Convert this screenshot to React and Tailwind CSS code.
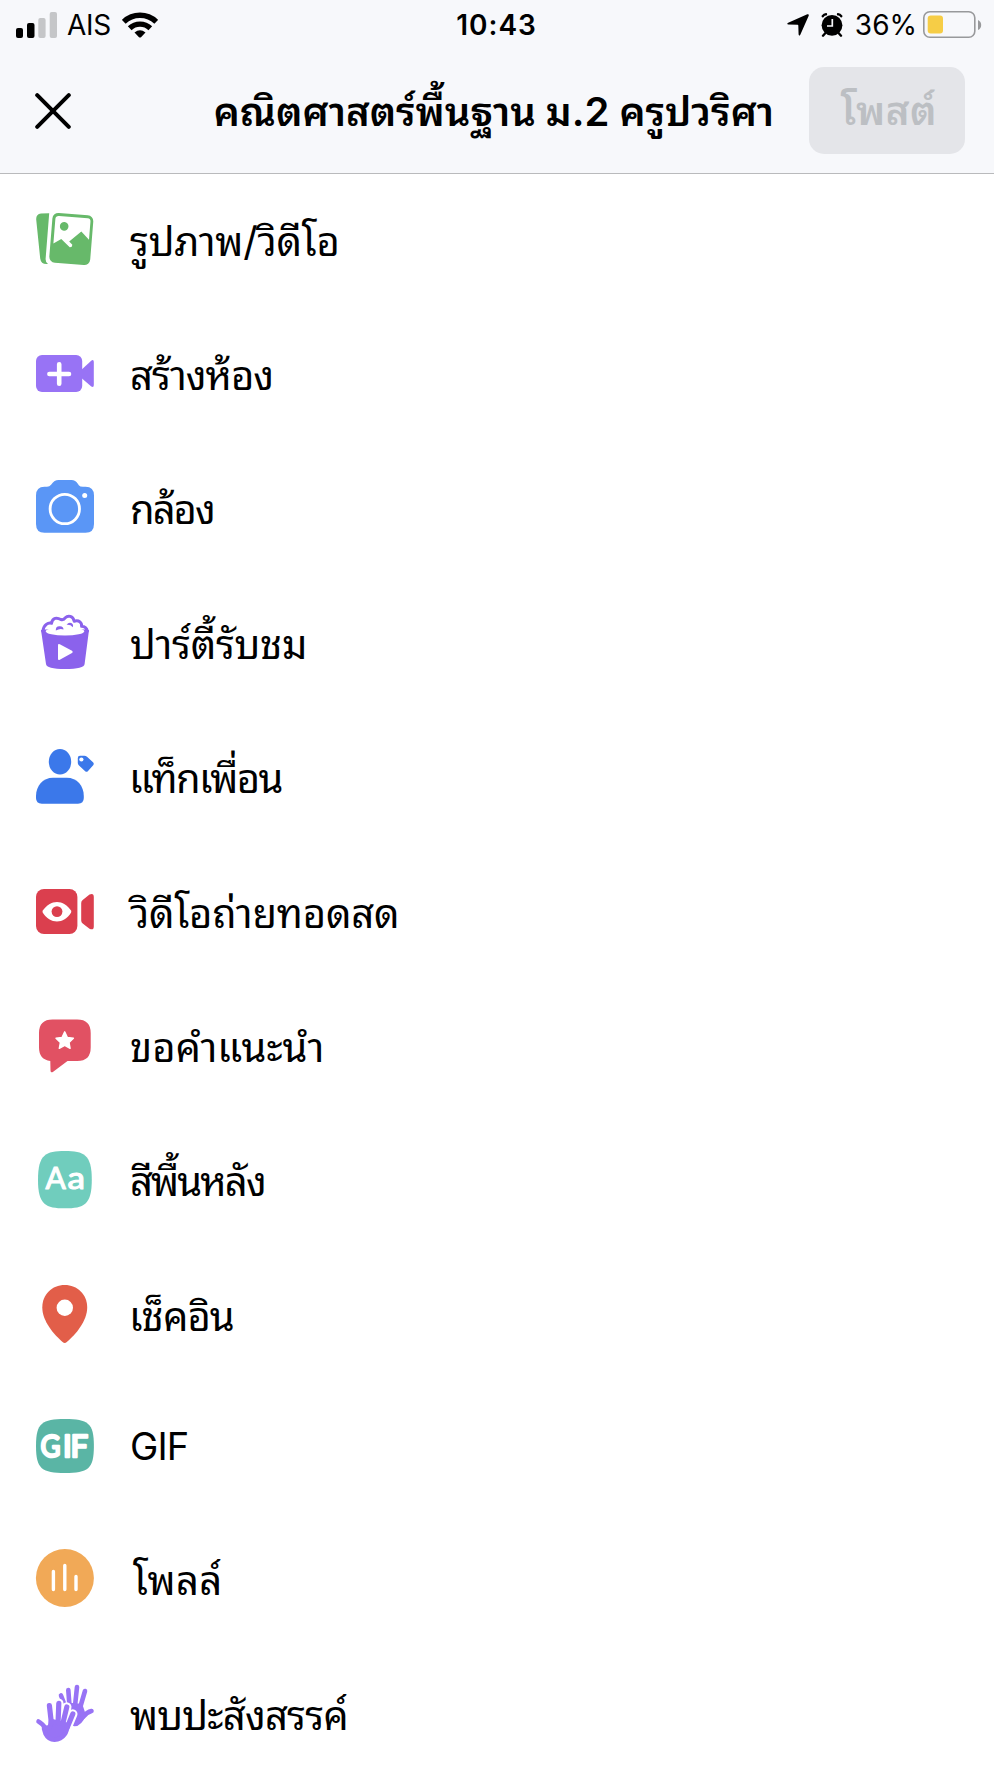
import React from "react";

const PhotoIcon = () => (
  <svg viewBox="0 0 58 58" className="size-[58px] overflow-visible" fill="#67b96a">
    <path d="M5 3.6L13.2 3.3L9.6 49Q9.5 52.5 12 54Q5 54.8 4.2 48.5L0.2 9.5Q0 4.2 5 3.6Z" />
    <g transform="rotate(4.6 35.3 29)">
      <rect x="14.8" y="4" width="41" height="50" rx="6" />
      <path
        d="M21.3 7H50Q53 7 53 10V28.4L44.7 20.8L33.4 31.6L36.8 34.6Q37 37.4 34.4 37.4L25.3 29.8L17.8 34.8V10Q18 7 21.3 7Z"
        fill="#fff"
      />
      <circle cx="27.2" cy="17" r="4.3" />
    </g>
  </svg>
);

const RoomIcon = () => (
  <svg viewBox="0 0 58 58" className="size-[58px] overflow-visible" fill="#9873f5">
    <rect x="0" y="11" width="46.2" height="37" rx="6" />
    <path d="M46 25.3L55.5 16.4Q57.8 15.4 57.8 18V41Q57.8 44 55.3 42.6L46 34.6Z" />
    <path
      d="M23.2 20.2V39.8M13.4 30H33"
      stroke="#fff"
      strokeWidth="4.6"
      strokeLinecap="round"
    />
  </svg>
);

const CameraIcon = () => (
  <svg viewBox="0 0 58 58" className="size-[58px] overflow-visible" fill="#5a96f6">
    <path d="M8.5 8.7H11Q13.5 8.7 15.3 6.4Q18.5 2 22.5 2H35.5Q39.5 2 42 6L42.8 7.2Q44 8.7 47 8.7H49.5Q58 8.7 58 17.5V46Q58 54.8 49.5 54.8H8.5Q0 54.8 0 46V17.5Q0 8.7 8.5 8.7Z" />
    <circle cx="28.8" cy="31" r="14.7" fill="none" stroke="#fff" strokeWidth="2.8" />
    <circle cx="48.7" cy="17.4" r="2.5" fill="#fff" />
  </svg>
);

const PopcornIcon = () => (
  <svg viewBox="0 0 58 58" className="size-[58px] overflow-visible" fill="#8b62ec">
    <path d="M5 17L53 17L48.6 51Q48.2 56 29 56Q10.5 56 10 51Z" />
    <path
      d="M6.8 18C8 11.5 12 9.5 15.5 10.3C16.5 4.5 21 4.2 24.8 6.5C27.5 7.2 28.3 6.5 29.3 4.8C32.2 1.8 37 3 38.2 8.2C43.2 6.8 46 9.8 45.6 13.3C49.2 13.6 50.8 15.4 51.4 18Z"
      fill="#fff"
      stroke="#8b62ec"
      strokeWidth="3"
      strokeLinejoin="round"
    />
    <ellipse cx="29" cy="18.3" rx="19.3" ry="4.3" fill="#fff" />
    <path d="M19.8 17.5Q19.5 12.8 24 13.2Q27.6 13.4 27.5 16.6Q24.5 14.8 19.8 17.5Z" />
    <path d="M30.6 11.8Q32.4 8.9 35.3 9.9Q37.8 11 36.8 14.2Q34.6 11.4 30.6 11.8Z" />
    <path d="M22 32.2Q22 30.4 23.8 31.2L36 37.8Q37.6 39 36 40L23.8 46.8Q22 47.6 22 45.8Z" fill="#fff" />
  </svg>
);

const TagFriendsIcon = () => (
  <svg viewBox="0 0 58 58" className="size-[58px] overflow-visible" fill="#3b78ea">
    <ellipse cx="24" cy="14.8" rx="11.2" ry="12.8" />
    <path d="M17 30.8H30.8C41 30.8 47.8 39 47.8 49V51Q47.8 56.7 42 56.7H5.8Q0 56.7 0 51V49C0 39 7 30.8 17 30.8Z" />
    <path d="M44 8.7H48.3Q49.8 8.7 51 9.7L57 15.3Q58.4 16.7 57.2 18.2L51.8 24.2Q50.6 25.4 49.2 24.2L43 18.5Q41.8 17.4 41.8 16V11Q41.8 8.7 44 8.7Z" />
    <circle cx="45.4" cy="12.5" r="2.1" fill="#fff" />
  </svg>
);

const LiveIcon = () => (
  <svg viewBox="0 0 58 58" className="size-[58px] overflow-visible" fill="#db3f4e">
    <rect x="0" y="7" width="41.4" height="45" rx="8" />
    <path d="M45.2 21Q45.2 19 46.7 17.9L53.5 12.6Q57.8 10.8 57.8 15V44.5Q57.8 48.6 53.5 46.8L46.7 41.4Q45.2 40.2 45.2 38.4Z" />
    <path
      d="M6.8 28.6C14 17 28 17 35 28.6Q35.6 29.7 35 30.8C28 42.4 14 42.4 6.8 30.8Q6.2 29.7 6.8 28.6Z"
      fill="#fff"
    />
    <circle cx="21" cy="29.6" r="5.4" />
  </svg>
);

const RecommendIcon = () => (
  <svg viewBox="0 0 58 58" className="size-[58px] overflow-visible" fill="#e15163">
    <path d="M16.5 3.4H41.2Q54.7 3.4 54.7 17V31.5Q54.7 45 41.2 45H31.5L17.2 55.8Q14.6 57.4 14.5 54.5L14.3 45Q3 43.5 3 31.5V17Q3 3.4 16.5 3.4Z" />
    <path
      d="M28.7 15.8L31.4 21.5L37.4 22.2L33 26.4L34.1 32.3L28.7 29.4L23.3 32.3L24.4 26.4L20 22.2L26 21.5Z"
      fill="#fff"
      stroke="#fff"
      strokeWidth="1.4"
      strokeLinejoin="round"
    />
  </svg>
);

const BackgroundIcon = () => (
  <svg viewBox="0 0 58 58" className="size-[58px] overflow-visible">
    <path
      d="M28.8 1C48 1 55.8 4.5 55.8 29.7C55.8 54.8 48 58.3 28.8 58.3C9.7 58.3 2 54.8 2 29.7C2 4.5 9.7 1 28.8 1Z"
      fill="#70cdbd"
    />
    <g
      className="font-['Lato'] text-[30px]"
      fill="#fff"
      stroke="#fff"
      strokeWidth="1.1"
      strokeLinejoin="round"
    >
      <text x="9.6" y="38.8">A</text>
      <text x="31.5" y="38.8" textLength="17.5" lengthAdjust="spacingAndGlyphs">a</text>
    </g>
  </svg>
);

const CheckInIcon = () => (
  <svg viewBox="0 0 58 58" className="size-[58px] overflow-visible">
    <path
      d="M28.7 0C41.5 0 51.2 9.5 51.2 22.5C51.2 36 40 49 30.8 57Q28.7 58.8 26.6 57C17.5 49 6.3 36 6.3 22.5C6.3 9.5 16 0 28.7 0Z"
      fill="#e25e49"
    />
    <circle cx="28.8" cy="22.8" r="8.2" fill="#fff" />
  </svg>
);

const GifIcon = () => (
  <svg viewBox="0 0 58 58" className="size-[58px] overflow-visible">
    <path
      d="M29 2C52 2 57.9 6 57.9 29C57.9 52 52 56 29 56C6 56 0 52 0 29C0 6 6 2 29 2Z"
      fill="#5ab5a5"
    />
    <g
      className="font-['Lato'] text-[31px]"
      fill="#fff"
      stroke="#fff"
      strokeWidth="2.5"
      strokeLinejoin="round"
    >
      <text x="4.6" y="40.2" textLength="20" lengthAdjust="spacingAndGlyphs">G</text>
      <text x="27" y="40.2">I</text>
      <text x="34.4" y="40.2">F</text>
    </g>
  </svg>
);

const PollIcon = () => (
  <svg viewBox="0 0 58 58" className="size-[58px] overflow-visible">
    <circle cx="28.9" cy="29" r="29" fill="#f1a957" />
    <path
      d="M17.4 22.5V40.5M28.8 16.4V40.5M40 27.5V40.5"
      stroke="#fff"
      strokeWidth="3.4"
      strokeLinecap="round"
    />
  </svg>
);

const fingers = "M13.4 21.6L15.5 40M22.8 19.3L22 40M30.8 23L26.5 41M36.8 30L31 44";
const thumb = "M2.5 37.5Q6.5 39.5 10 45";

const MeetIcon = () => (
  <svg
    viewBox="0 0 58 58"
    className="size-[58px] overflow-visible"
    fill="#9873f5"
    stroke="#9873f5"
    strokeWidth="4.6"
    strokeLinecap="round"
    strokeLinejoin="round"
  >
    <path d="M25 11.5L29 22M32.3 6L33.5 22M41 3L39 22M49 7L44 24M55.5 27Q51 28 47 33" fill="none" />
    <path d="M33 21L44.5 22L47.5 31Q44 39.5 38.5 40L32 30Z" />
    <path d={fingers} fill="none" stroke="#fff" strokeWidth="9.4" />
    <path d={fingers} fill="none" strokeWidth="5.2" />
    <path d={thumb} fill="none" />
    <path d="M15 37L31.5 41Q31 47 28.5 50.5Q25 55.6 18.5 55.6Q12.500 55.600 9.700 50L8 44.500L14 43Z" />
  </svg>
);

const menuItems = [
  { label: "รูปภาพ/วิดีโอ", Icon: PhotoIcon, spacing: "tracking-[-0.2px]" },
  { label: "สร้างห้อง", Icon: RoomIcon, spacing: "tracking-[-1px]" },
  { label: "กล้อง", Icon: CameraIcon, spacing: "tracking-[-2px]" },
  { label: "ปาร์ตี้รับชม", Icon: PopcornIcon, spacing: "tracking-[-0.3px]" },
  { label: "แท็กเพื่อน", Icon: TagFriendsIcon, spacing: "-ml-px tracking-[-1.6px]" },
  { label: "วิดีโอถ่ายทอดสด", Icon: LiveIcon, spacing: "tracking-[-0.2px]" },
  { label: "ขอคำแนะนำ", Icon: RecommendIcon },
  { label: "สีพื้นหลัง", Icon: BackgroundIcon, spacing: "tracking-[-1.9px]" },
  { label: "เช็คอิน", Icon: CheckInIcon, spacing: "-ml-px tracking-[-0.9px]" },
  { label: "GIF", Icon: GifIcon, latin: true },
  { label: "โพลล์", Icon: PollIcon, spacing: "ml-[3px] tracking-[0.4px]" },
  { label: "พบปะสังสรรค์", Icon: MeetIcon, spacing: "tracking-[-0.8px]" },
];

const StatusBar = () => (
  <div className="grid h-[50px] grid-cols-3 items-center pl-4 pr-3 text-[28px] leading-none">
    <div className="flex items-center">
      <svg viewBox="0 0 42 26" className="h-[26px] w-[42px]">
        <rect x="0" y="16" width="7" height="10" rx="2" />
        <rect x="11" y="11" width="7.5" height="15" rx="2" />
        <rect x="22.3" y="6" width="7.3" height="20" rx="2" fill="#c5c6c8" />
        <rect x="33.7" y="0" width="7.3" height="26" rx="2" fill="#c5c6c8" />
      </svg>
      <span className="ml-[9px] tracking-[-0.3px]">AIS</span>
      <svg viewBox="0 0 36 26" className="ml-[11px] h-[26px] w-9">
        <g fill="none" stroke="#000" strokeWidth="5.4">
          <path d="M1.8 9.8A23.5 23.5 0 0 1 34.2 9.8" />
          <path d="M7.7 16.2A15 15 0 0 1 28.3 16.2" />
        </g>
        <path d="M12.5 20.5Q18 15.8 23.5 20.5L19 25.2Q18 26 17 25.2Z" />
      </svg>
    </div>
    <span className="pr-[5px] text-center font-semibold tracking-[1px]">10:43</span>
    <div className="flex items-center justify-end">
      <svg viewBox="0 0 22 22" className="h-[22px] w-[22px]">
        <path d="M20.3 0.3Q22.2 -0.2 21.7 1.7L13.3 20.8Q12.2 22.6 11.6 20.5L11.3 11.5Q11.3 10.8 10.6 10.8L1.3 10.5Q-0.7 9.8 1.2 8.8Z" />
      </svg>
      <svg viewBox="0 0 22 24" className="ml-3 h-6 w-[22px]">
        <circle cx="11" cy="12.3" r="10.4" />
        <path
          d="M1.8 3.2Q3 1.2 5 1.2M17 1.2Q19 1.2 20.2 3.2M4 20.5L2 22.7M18 20.5L20 22.7"
          fill="none"
          stroke="#000"
          strokeWidth="2.4"
          strokeLinecap="round"
        />
        <path d="M11.3 6V13H6" fill="none" stroke="#f7f8fb" strokeWidth="1.7" />
      </svg>
      <span className="ml-3">36%</span>
      <svg viewBox="0 0 59 28" className="ml-[6px] h-7 w-[59px]">
        <rect x="0.8" y="0.8" width="51" height="25.5" rx="6" fill="none" stroke="#98999b" strokeWidth="1.6" />
        <rect x="4.7" y="4.6" width="15.3" height="18" rx="3" fill="#f6cd46" />
        <path d="M55 9Q58.2 10.5 58.2 14Q58.2 17.5 55 19Z" fill="#98999b" />
      </svg>
    </div>
  </div>
);

const Header = () => (
  <header className="flex h-[124px] items-start justify-between border-b border-[#b9babc] pl-[35px] pr-[29px] pt-[17px]">
    <button className="flex h-[87px] items-center" aria-label="ปิด">
      <svg viewBox="0 0 36 36" className="size-9">
        <path d="M2.2 2.2L33.8 33.8M33.8 2.2L2.2 33.8" stroke="#000" strokeWidth="4" strokeLinecap="round" />
      </svg>
    </button>
    <div className="flex items-start gap-[35px]">
      <h1 className="h-[87px] whitespace-nowrap text-[40px] font-semibold leading-[89px] tracking-[-0.08px]">
        คณิตศาสตร์พื้นฐาน ม.2 ครูปวริศา
      </h1>
      <button className="h-[87px] w-[156px] rounded-[15px] bg-[#e4e5e9] pl-1 text-[40px] font-semibold leading-[87px] tracking-[0.5px] text-[#bcbfc3]">
        โพสต์
      </button>
    </div>
  </header>
);

const MenuRow = ({ label, Icon, latin, spacing = "" }) => (
  <li className={latin ? "flex h-[130px] shrink-0 items-center" : "flex h-[134.4px] shrink-0 items-center"}>
    <Icon />
    <div className="pl-9">
      <p
        className={
          latin
            ? "text-[38px] leading-none tracking-[-0.9px]"
            : `pt-1.5 text-[40px] leading-none ${spacing}`
        }
      >
        {label}
      </p>
    </div>
  </li>
);

export default function App() {
  return (
    <div className="flex h-[1767px] w-full flex-col overflow-hidden bg-white font-['Inter','Noto_Sans_Thai_Looped','Noto_Sans',sans-serif] text-black">
      <div className="shrink-0 bg-[#f7f8fb]">
        <StatusBar />
        <Header />
      </div>
      <ul className="-mt-[2.5px] flex flex-col pl-9">
        {menuItems.map((item) => (
          <MenuRow key={item.label} {...item} />
        ))}
      </ul>
    </div>
  );
}
